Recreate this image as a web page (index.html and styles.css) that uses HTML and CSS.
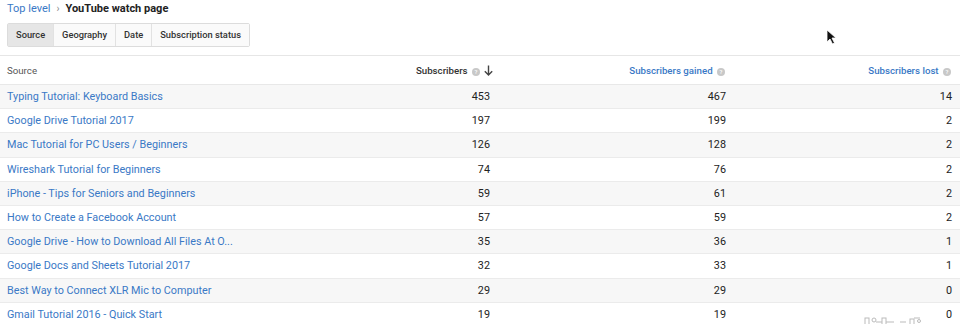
FILE: index.html
```html
<!DOCTYPE html>
<html>
<head>
<meta charset="utf-8">
<link rel="stylesheet" href="styles.css">
</head>
<body>
<div class="crumbs"><a class="crumb-link">Top level</a><span class="sep">›</span><span class="crumb-current">YouTube watch page</span></div>
<div class="tabs">
  <div class="tab active">Source</div>
  <div class="tab">Geography</div>
  <div class="tab">Date</div>
  <div class="tab">Subscription status</div>
</div>
<div class="table">
  <div class="row head">
    <div class="cell src">Source</div>
    <div class="cell num sorted">Subscribers <span class="help">?</span><svg class="arrow" width="9" height="11" viewBox="0 0 9 11"><path d="M4.5 0.5 V10 M0.8 6.3 L4.5 10 L8.2 6.3" fill="none" stroke="#444" stroke-width="1.4"/></svg></div>
    <div class="cell num link">Subscribers gained <span class="help">?</span></div>
    <div class="cell num link">Subscribers lost <span class="help">?</span></div>
  </div>
  <div class="row"><div class="cell src link">Typing Tutorial: Keyboard Basics</div><div class="cell num">453</div><div class="cell num">467</div><div class="cell num">14</div></div>
  <div class="row"><div class="cell src link">Google Drive Tutorial 2017</div><div class="cell num">197</div><div class="cell num">199</div><div class="cell num">2</div></div>
  <div class="row"><div class="cell src link">Mac Tutorial for PC Users / Beginners</div><div class="cell num">126</div><div class="cell num">128</div><div class="cell num">2</div></div>
  <div class="row"><div class="cell src link">Wireshark Tutorial for Beginners</div><div class="cell num">74</div><div class="cell num">76</div><div class="cell num">2</div></div>
  <div class="row"><div class="cell src link">iPhone - Tips for Seniors and Beginners</div><div class="cell num">59</div><div class="cell num">61</div><div class="cell num">2</div></div>
  <div class="row"><div class="cell src link">How to Create a Facebook Account</div><div class="cell num">57</div><div class="cell num">59</div><div class="cell num">2</div></div>
  <div class="row"><div class="cell src link">Google Drive - How to Download All Files At O...</div><div class="cell num">35</div><div class="cell num">36</div><div class="cell num">1</div></div>
  <div class="row"><div class="cell src link">Google Docs and Sheets Tutorial 2017</div><div class="cell num">32</div><div class="cell num">33</div><div class="cell num">1</div></div>
  <div class="row"><div class="cell src link">Best Way to Connect XLR Mic to Computer</div><div class="cell num">29</div><div class="cell num">29</div><div class="cell num">0</div></div>
  <div class="row"><div class="cell src link">Gmail Tutorial 2016 - Quick Start</div><div class="cell num">19</div><div class="cell num">19</div><div class="cell num">0</div></div>
</div>
<svg class="cursor" width="12" height="16" viewBox="0 0 12 16"><path d="M1 1 L1 13 L4 10 L6.5 15 L8.5 14 L6 9 L10 9 Z" fill="#111" stroke="#fff" stroke-width="0.8"/></svg>
<svg class="peek" width="100" height="8" viewBox="0 0 100 8"><g fill="none" stroke="#bbb" stroke-width="1"><rect x="5" y="1" width="4" height="8"/><circle cx="14" cy="3" r="2"/><path d="M16 5 H22"/><rect x="22" y="1" width="4" height="8"/><path d="M26 5 H34"/><path d="M40 5 H46"/><rect x="50" y="2" width="4" height="7"/><path d="M54 1 H60"/><circle cx="59" cy="4" r="1.5"/></g></svg>
</body>
</html>
```
FILE: styles.css
```css
* { box-sizing: border-box; }
body {
  margin: 0;
  font-family: Roboto, "Noto Sans", Arial, sans-serif;
  background: #fff;
  color: #222;
  width: 960px;
  height: 324px;
  overflow: hidden;
  position: relative;
}
.crumbs {
  height: 18px;
  padding: 0 0 0 7px;
  font-size: 11px;
  line-height: 16px;
  display: flex;
  align-items: center;
}
.crumb-link { color: #3a79c6; }
.sep { color: #888; margin: 0 6px 0 6px; font-size: 10px; }
.crumb-current { font-weight: 700; color: #222; }
.tabs {
  margin: 5px 0 0 7px;
  display: inline-flex;
  border: 1px solid #dcdcdc;
  border-radius: 2px;
  height: 24px;
}
.tab {
  font-size: 9.3px;
  font-weight: 500;
  color: #333;
  padding: 0 8px;
  line-height: 22px;
  border-left: 1px solid #e2e2e2;
  background: #fafafa;
}
.tab:first-child { border-left: none; }
.tab.active { background: #e6e6e6; padding: 0 8px; }
.table {
  margin-top: 8px;
  border-top: 1px solid #e6e6e6;
}
.row {
  display: grid;
  grid-template-columns: 1fr 200px 236px 226px;
  padding: 0 8px 0 7px;
  height: 24.2px;
  align-items: center;
  border-bottom: 1px solid #ebebeb;
  font-size: 10.8px;
}
.row:nth-child(even) { background: #f7f7f7; }
.row.head {
  height: 29px;
  font-size: 9.7px;
  background: #fff;
  color: #555;
  border-bottom: 1px solid #e8e8e8;
}
.cell { white-space: nowrap; }
.num { text-align: right; color: #222; }
.link { color: #3a79c6; }
.head .num { font-weight: 500; }
.head .sorted { color: #333; margin-right: -3px; }
.head .link { color: #3a79c6; margin-right: 1px; }
.head .src { color: #555; }
.help {
  display: inline-block;
  width: 8px;
  height: 8px;
  border-radius: 50%;
  background: #c8c8c8;
  color: #fff;
  font-size: 6px;
  line-height: 8px;
  text-align: center;
  margin-left: 2px;
  vertical-align: 0;
}
.arrow { margin-left: 4px; vertical-align: -2px; }
.cursor { position: absolute; left: 826px; top: 29px; }
.peek { position: absolute; left: 860px; top: 317px; }
```
